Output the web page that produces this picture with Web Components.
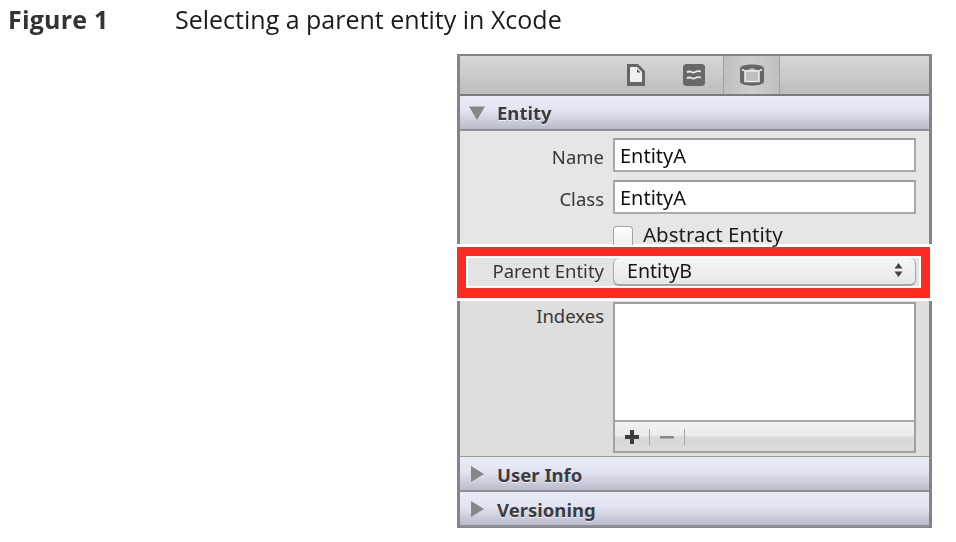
<!DOCTYPE html>
<html>
<head>
<meta charset="utf-8">
<style>
html, body { margin: 0; padding: 0; background: #fff; }
body { width: 956px; height: 542px; overflow: hidden; font-family: "Noto Sans", sans-serif; }
</style>
</head>
<body>
<fig-caption label="Figure 1">Selecting a parent entity in Xcode</fig-caption>
<insp-panel>
  <insp-pane slot="top" height="190" edge="top">
    <insp-toolbar></insp-toolbar>
    <insp-head open>Entity</insp-head>
    <insp-body pad="7">
      <insp-field label="Name" lh="38"><insp-input>EntityA</insp-input></insp-field>
      <insp-field label="Class" gap="8" lh="38"><insp-input>EntityA</insp-input></insp-field>
      <insp-field gap="12"><insp-check>Abstract Entity</insp-check></insp-field>
    </insp-body>
  </insp-pane>
  <insp-mark slot="mark">
    <insp-field label="Parent Entity" small lh="26"><insp-select>EntityB</insp-select></insp-field>
  </insp-mark>
  <insp-pane slot="bottom" height="227" edge="bottom">
    <insp-body pad="1" height="156">
      <insp-field label="Indexes" lh="28"><insp-list></insp-list></insp-field>
    </insp-body>
    <insp-head>User Info</insp-head>
    <insp-head>Versioning</insp-head>
  </insp-pane>
</insp-panel>

<script>
class figCaption extends HTMLElement {
    constructor() {
        super();
        this.attachShadow({mode: "open"}).innerHTML = `
        <style>
            :host { display: flex; height: 54px; padding: 5px 0 0 8px; box-sizing: border-box;
                font-family: "Open Sans", sans-serif; font-size: 25px; line-height: 28px; color: #1a1a1a; filter: blur(.3px); }
            b { width: 167px; font-weight: 700; color: #333; letter-spacing: .2px; }
        </style>
        <b></b><span><slot></slot></span>`;
        this.shadowRoot.querySelector("b").textContent = this.getAttribute("label");
    }
}
customElements.define("fig-caption", figCaption);

class inspPanel extends HTMLElement {
    constructor() {
        super();
        this.attachShadow({mode: "open"}).innerHTML = `
        <style>
            :host { display: flex; flex-direction: column; width: 475px; margin-left: 457px; filter: blur(.4px); }
        </style>
        <slot name="top"></slot><slot name="mark"></slot><slot name="bottom"></slot>`;
    }
}
customElements.define("insp-panel", inspPanel);

class inspPane extends HTMLElement {
    constructor() {
        super();
        this.attachShadow({mode: "open"}).innerHTML = `
        <style>
            :host { display: flex; flex-direction: column; box-sizing: border-box;
                border: solid #858585; border-width: 0 3px; background: #e6e6e6; }
            :host([edge=top]) { border-top-width: 2px; }
            :host([edge=bottom]) { border-bottom-width: 2px; background: #dedede; }
        </style>
        <slot></slot>`;
        this.style.height = this.getAttribute("height") + "px";
    }
}
customElements.define("insp-pane", inspPane);

class inspToolbar extends HTMLElement {
    constructor() {
        super();
        this.attachShadow({mode: "open"}).innerHTML = `
        <style>
            :host { display: flex; height: 40px; flex: none; box-sizing: border-box; padding-left: 147px;
                border-bottom: 2px solid #7c7c7c;
                background: linear-gradient(#d8d8d8, #bcbcbc); }
            div { display: flex; align-items: center; justify-content: center; height: 38px; }
            .on { width: 57px; box-sizing: border-box; border: solid #a0a0a0; border-width: 0 1px;
                background: linear-gradient(90deg, #c0c0c0, #cdcdcd 50%, #c0c0c0); }
            svg { display: block; }
        </style>
        <div style="width:58px">
            <svg width="18" height="22" viewBox="0 0 18 22">
                <path d="M0 0h11l7 7v15H0z" fill="#666"/>
                <path d="M3 3h7l5 5v10H3z" fill="#f0f0f0"/>
                <path d="M10 5v3.500h3.500z" fill="#555"/>
            </svg>
        </div>
        <div style="width:58px">
            <svg width="22" height="22" viewBox="0 0 22 22">
                <rect width="22" height="22" rx="3.500" fill="#686868"/>
                <path d="M4 8.500c3-3 5 1 7 0s4-2 7-1M4 14.500c3-3 5 1 7 0s4-2 7-1" fill="none" stroke="#e8e8e8" stroke-width="1.800"/>
            </svg>
        </div>
        <div class="on">
            <svg width="24" height="22" viewBox="0 0 24 22">
                <path d="M0 4.500C0-1 24-1 24 4.500v13c0 5.500-24 5.500-24 0z" fill="#666"/>
                <path d="M5 7l7-3 7 3v10H5z" fill="#bdbdbd"/>
                <path d="M2 5.500L5 7v10.500h14V7l3-1.500M5 7h14" fill="none" stroke="#ececec" stroke-width="1.500"/>
            </svg>
        </div>`;
    }
}
customElements.define("insp-toolbar", inspToolbar);

class inspHead extends HTMLElement {
    constructor() {
        super();
        let open = this.hasAttribute("open");
        this.attachShadow({mode: "open"}).innerHTML = `
        <style>
            :host { display: flex; align-items: center; height: 35px; flex: none; box-sizing: border-box;
                padding: ${open ? 0 : 1}px 0 0 9px; border-bottom: 2px solid #8f8f94;
                background: linear-gradient(#e9ebf6 0%, #e2e4f1 45%, #b9bbca 100%);
                font-size: 18.500px; font-weight: 700; color: #3c3c3c; text-shadow: 0 1px 0 #eef; }
            svg { flex: none; margin-right: 12px; }
        </style>
        <svg width="16" height="16" viewBox="0 0 16 16">
            <path d="${open ? "M0 1.500h16L8 15z" : "M2 0v16l13-8z"}" fill="#878787"/>
        </svg>
        <slot></slot>`;
    }
}
customElements.define("insp-head", inspHead);

class inspBody extends HTMLElement {
    constructor() {
        super();
        this.attachShadow({mode: "open"}).innerHTML = `
        <style>
            :host { display: block; flex: none; box-sizing: border-box; }
        </style>
        <slot></slot>`;
        this.style.paddingTop = this.getAttribute("pad") + "px";
        if (this.hasAttribute("height")) {
            this.style.height = this.getAttribute("height") + "px";
            this.style.borderBottom = "1px solid #9a9a9a";
        }
    }
}
customElements.define("insp-body", inspBody);

class inspField extends HTMLElement {
    constructor() {
        super();
        this.attachShadow({mode: "open"}).innerHTML = `
        <style>
            :host { display: flex; align-items: flex-start; font-size: 18.500px; color: #363636; }
            label { width: 144px; height: 20px; flex: none; margin-right: 9px; text-align: right; white-space: nowrap; }
        </style>
        <label></label><slot></slot>`;
        let label = this.shadowRoot.querySelector("label");
        label.textContent = this.getAttribute("label") || "";
        label.style.lineHeight = (this.getAttribute("lh") || 34) + "px";
        if (this.hasAttribute("gap")) this.style.marginTop = this.getAttribute("gap") + "px";
    }
}
customElements.define("insp-field", inspField);

class inspInput extends HTMLElement {
    constructor() {
        super();
        this.attachShadow({mode: "open"}).innerHTML = `
        <style>
            :host { display: block; width: 303px; height: 34px; box-sizing: border-box; padding-left: 5px;
                border: 2px solid #a9a9a9; border-top-color: #9c9c9c; background: #fff;
                font-size: 20px; line-height: 32px; color: #111; }
        </style>
        <slot></slot>`;
    }
}
customElements.define("insp-input", inspInput);

class inspCheck extends HTMLElement {
    constructor() {
        super();
        this.attachShadow({mode: "open"}).innerHTML = `
        <style>
            :host { display: flex; align-items: flex-start; height: 19px; font-size: 20.500px; line-height: 17px; color: #1c1c1c; }
            i { width: 20px; height: 19px; margin-right: 10px; box-sizing: border-box; border: 1.500px solid #a5a5a5;
                border-bottom: 0; border-radius: 4px 4px 0 0; background: linear-gradient(#fff, #f1f1f1); }
        </style>
        <i></i><slot></slot>`;
    }
}
customElements.define("insp-check", inspCheck);

class inspSelect extends HTMLElement {
    constructor() {
        super();
        this.attachShadow({mode: "open"}).innerHTML = `
        <style>
            :host { display: flex; align-items: center; justify-content: space-between; width: 303px; height: 28px;
                box-sizing: border-box; padding: 0 12px 2px 13px; border: solid #a6a6a6; border-width: 0 1px 2px;
                border-radius: 6px; background: linear-gradient(#f6f6f6, #e7e7e7);
                font-size: 19.600px; color: #161616; }
        </style>
        <slot></slot>
        <svg width="9" height="16" viewBox="0 0 9 16"><path d="M4.500 1L8.500 6.500H.5zM4.500 15L.5 9.500h8z" fill="#444"/></svg>`;
    }
}
customElements.define("insp-select", inspSelect);

class inspMark extends HTMLElement {
    constructor() {
        super();
        this.attachShadow({mode: "open"}).innerHTML = `
        <style>
            :host { display: block; width: 473px; height: 51px; margin: 3px 0; box-sizing: border-box;
                border: 9px solid #ff2a20; border-bottom-width: 10px; background: #fff; }
            div { height: 100%; box-sizing: border-box; border: 2px solid #fff; background: #e3e3e3; overflow: hidden; }
            ::slotted(insp-field) { margin-left: -8px; }
        </style>
        <div><slot></slot></div>`;
    }
}
customElements.define("insp-mark", inspMark);

class inspList extends HTMLElement {
    constructor() {
        super();
        this.attachShadow({mode: "open"}).innerHTML = `
        <style>
            :host { display: flex; flex-direction: column; width: 303px; height: 151px; box-sizing: border-box;
                border: 2px solid #a0a0a0; background: #fff; }
            .rows { flex: 1; }
            .bar { display: flex; align-items: center; height: 31px; box-sizing: border-box; padding-left: 9px;
                border-top: 2px solid #a8a8a8;
                background: linear-gradient(#f2f2f2, #ebebeb 45%, #d8d8d8 55%, #dcdcdc); }
            svg { display: block; }
            s { display: block; width: 1px; height: 16px; background: #a6a6a6; }
        </style>
        <div class="rows"></div>
        <div class="bar">
            <svg width="16" height="16" viewBox="0 0 16 16"><path d="M6 1h4v5h5v4h-5v5H6v-5H1V6h5z" fill="#3c3c3c"/></svg>
            <s style="margin:0 9px 0 9px"></s>
            <svg width="16" height="16" viewBox="0 0 16 16"><path d="M1 7h14v2.500H1z" fill="#8a8a8a"/></svg>
            <s style="margin-left:9px"></s>
        </div>`;
    }
}
customElements.define("insp-list", inspList);
</script>
</body>
</html>
